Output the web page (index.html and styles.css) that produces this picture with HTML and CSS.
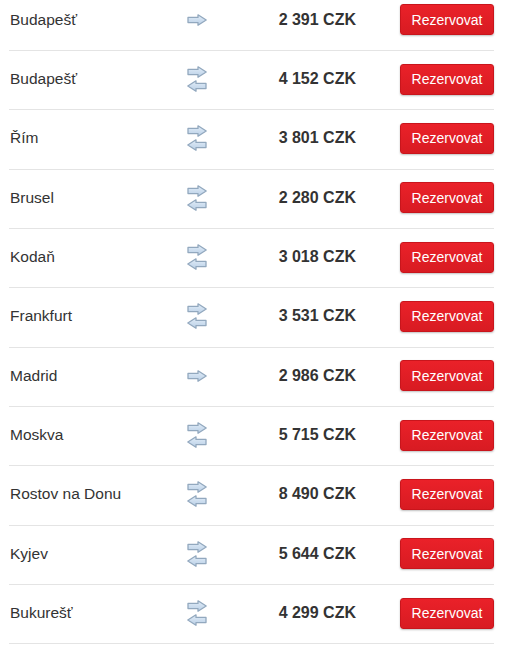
FILE: index.html
```html
<!DOCTYPE html>
<html lang="cs">
<head>
<meta charset="utf-8">
<link rel="stylesheet" href="styles.css">
</head>
<body>
<svg width="0" height="0" class="defs">
  <defs>
    <linearGradient id="ag" x1="0" y1="0" x2="0" y2="1">
      <stop offset="0" stop-color="#e2edf8"/>
      <stop offset="1" stop-color="#b9cfe6"/>
    </linearGradient>
    <symbol id="ar" viewBox="0 0 20 12">
      <path d="M1 3.4 H11 V0.8 L19.2 6 L11 11.2 V8.6 H1 Z" fill="url(#ag)" stroke="#92a8be" stroke-width="1.3" stroke-linejoin="round"/>
    </symbol>
    <symbol id="al" viewBox="0 0 20 12">
      <path d="M19 3.4 H9 V0.8 L0.8 6 L9 11.2 V8.6 H19 Z" fill="url(#ag)" stroke="#92a8be" stroke-width="1.3" stroke-linejoin="round"/>
    </symbol>
  </defs>
</svg>
<div class="list">
  <div class="row"><span class="city">Budapešť</span><span class="dir"><svg width="20" height="12"><use href="#ar"/></svg></span><span class="price">2 391 CZK</span><button class="btn">Rezervovat</button></div>
  <div class="row"><span class="city">Budapešť</span><span class="dir"><span class="two"><svg width="20" height="12"><use href="#ar"/></svg><svg width="20" height="12"><use href="#al"/></svg></span></span><span class="price">4 152 CZK</span><button class="btn">Rezervovat</button></div>
  <div class="row"><span class="city">Řím</span><span class="dir"><span class="two"><svg width="20" height="12"><use href="#ar"/></svg><svg width="20" height="12"><use href="#al"/></svg></span></span><span class="price">3 801 CZK</span><button class="btn">Rezervovat</button></div>
  <div class="row"><span class="city">Brusel</span><span class="dir"><span class="two"><svg width="20" height="12"><use href="#ar"/></svg><svg width="20" height="12"><use href="#al"/></svg></span></span><span class="price">2 280 CZK</span><button class="btn">Rezervovat</button></div>
  <div class="row"><span class="city">Kodaň</span><span class="dir"><span class="two"><svg width="20" height="12"><use href="#ar"/></svg><svg width="20" height="12"><use href="#al"/></svg></span></span><span class="price">3 018 CZK</span><button class="btn">Rezervovat</button></div>
  <div class="row"><span class="city">Frankfurt</span><span class="dir"><span class="two"><svg width="20" height="12"><use href="#ar"/></svg><svg width="20" height="12"><use href="#al"/></svg></span></span><span class="price">3 531 CZK</span><button class="btn">Rezervovat</button></div>
  <div class="row"><span class="city">Madrid</span><span class="dir"><svg width="20" height="12"><use href="#ar"/></svg></span><span class="price">2 986 CZK</span><button class="btn">Rezervovat</button></div>
  <div class="row"><span class="city">Moskva</span><span class="dir"><span class="two"><svg width="20" height="12"><use href="#ar"/></svg><svg width="20" height="12"><use href="#al"/></svg></span></span><span class="price">5 715 CZK</span><button class="btn">Rezervovat</button></div>
  <div class="row"><span class="city">Rostov na Donu</span><span class="dir"><span class="two"><svg width="20" height="12"><use href="#ar"/></svg><svg width="20" height="12"><use href="#al"/></svg></span></span><span class="price">8 490 CZK</span><button class="btn">Rezervovat</button></div>
  <div class="row"><span class="city">Kyjev</span><span class="dir"><span class="two"><svg width="20" height="12"><use href="#ar"/></svg><svg width="20" height="12"><use href="#al"/></svg></span></span><span class="price">5 644 CZK</span><button class="btn">Rezervovat</button></div>
  <div class="row"><span class="city">Bukurešť</span><span class="dir"><span class="two"><svg width="20" height="12"><use href="#ar"/></svg><svg width="20" height="12"><use href="#al"/></svg></span></span><span class="price">4 299 CZK</span><button class="btn">Rezervovat</button></div>
</div>
</body>
</html>
```
FILE: styles.css
```css
html, body {
  margin: 0;
  padding: 0;
  background: #ffffff;
  overflow: hidden;
}
body {
  font-family: "Liberation Sans", Arial, sans-serif;
  color: #333333;
}
.defs {
  position: absolute;
  width: 0;
  height: 0;
}
.list {
  margin: -8.33px 0 0 9px;
  width: 485px;
}
.row {
  box-sizing: border-box;
  height: 59.33px;
  border-bottom: 1px solid #e4e4e4;
  display: grid;
  grid-template-columns: 168px 40px 139px 1fr;
  align-items: center;
  padding-bottom: 2px;
}
.city {
  font-size: 15.5px;
  padding-left: 1px;
}
.dir {
  display: flex;
  justify-content: center;
  align-items: center;
}
.dir svg {
  display: block;
}
.two {
  display: flex;
  flex-direction: column;
  gap: 2px;
}
.price {
  font-size: 16px;
  font-weight: bold;
  text-align: right;
}
.btn {
  justify-self: end;
  width: 94px;
  height: 31px;
  padding: 0;
  border: 1px solid #c9151c;
  border-radius: 3px;
  background: linear-gradient(#ea2129, #d81b22);
  color: #ffffff;
  font-family: "Liberation Sans", Arial, sans-serif;
  font-size: 14px;
  box-shadow: 0 1px 2px rgba(0, 0, 0, 0.25);
}
```
